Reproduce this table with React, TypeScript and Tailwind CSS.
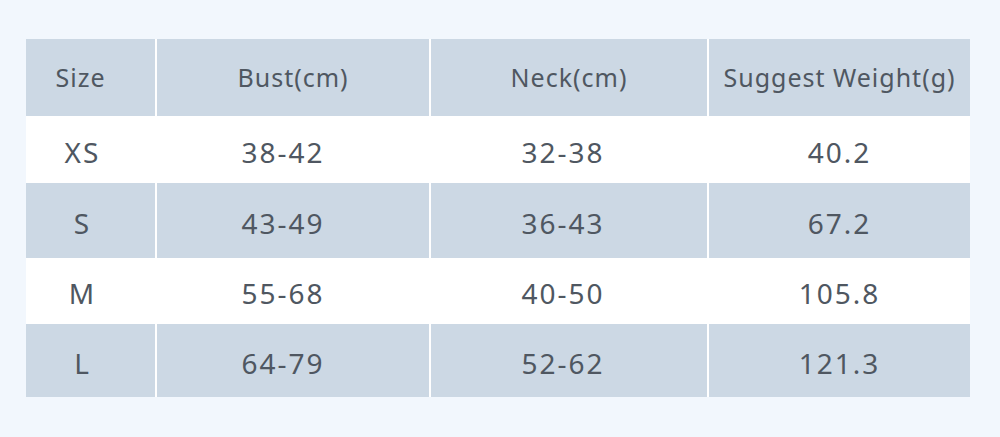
import React from 'react';

const header = ['Size', 'Bust(cm)', 'Neck(cm)', 'Suggest Weight(g)'];

const rows = [
  { size: 'XS', bust: '38-42', neck: '32-38', weight: '40.2', h: 'h-[63px]', gray: false },
  { size: 'S', bust: '43-49', neck: '36-43', weight: '67.2', h: 'h-[75px]', gray: true },
  { size: 'M', bust: '55-68', neck: '40-50', weight: '105.8', h: 'h-[62px]', gray: false },
  { size: 'L', bust: '64-79', neck: '52-62', weight: '121.3', h: 'h-[73px]', gray: true },
];

const cols = 'grid grid-cols-[129px_272px_276px_261px] gap-x-[2px]';

export default function App() {
  return (
    <div className="w-[1000px] h-[437px] bg-[#f2f7fd] pt-[39px] pl-[26px] font-['Noto_Sans',sans-serif] text-[#4f5761]">
      <div className="w-[944px] bg-white flex flex-col gap-y-[2px]">
        {/* header */}
        <div className={`${cols} h-[77px] text-[25px] tracking-[1px]`}>
          {header.map((h, i) => (
            <div
              key={h}
              className={`bg-[#ccd8e4] flex items-center justify-center ${i === 0 ? 'pr-5' : ''}`}
            >
              {h}
            </div>
          ))}
        </div>

        {rows.map((r) => {
          const bg = r.gray ? 'bg-[#ccd8e4]' : 'bg-white';
          return (
            <div key={r.size} className={`${cols} ${r.h} text-[28px] tracking-[2px]`}>
              <div className={`${bg} flex items-center justify-center pr-4 pt-1`}>{r.size}</div>
              <div className={`${bg} flex items-center justify-center pr-5 pt-1`}>{r.bust}</div>
              <div className={`${bg} flex items-center justify-center pr-3 pt-1`}>{r.neck}</div>
              <div className={`${bg} flex items-center justify-center pt-1`}>{r.weight}</div>
            </div>
          );
        })}
      </div>
    </div>
  );
}
